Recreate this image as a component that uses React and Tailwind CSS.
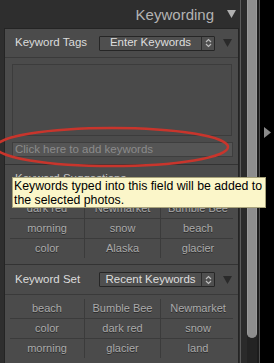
const keywordSuggestions = [
  ["dark red", "Newmarket", "Bumble Bee"],
  ["morning", "snow", "beach"],
  ["color", "Alaska", "glacier"],
];

const recentKeywords = [
  ["beach", "Bumble Bee", "Newmarket"],
  ["color", "dark red", "snow"],
  ["morning", "glacier", "land"],
];

function DownTriangle({ className }) {
  return (
    <svg width="9" height="8" viewBox="0 0 9 8" className={className}>
      <path d="M0 0 H9 L4.5 8 Z" fill="currentColor" />
    </svg>
  );
}

function Dropdown({ label }) {
  return (
    <div className="w-[116px] h-[15px] flex border border-[#262626] bg-[#4f4f4f] rounded-[1px]">
      <div className="flex-1 flex items-center justify-center text-[11.5px] text-[#dedede] leading-none">
        {label}
      </div>
      <div className="w-[13px] border-l border-[#2c2c2c] flex items-center justify-center">
        <svg width="7" height="10" viewBox="0 0 7 10">
          <path d="M1 4 L3.5 1.5 L6 4" fill="none" stroke="#bdbdbd" strokeWidth="1.2" />
          <path d="M1 6 L3.5 8.5 L6 6" fill="none" stroke="#bdbdbd" strokeWidth="1.2" />
        </svg>
      </div>
    </div>
  );
}

function KeywordGrid({ rows }) {
  return (
    <div className="mx-[5px] flex flex-col">
      {rows.map((row, i) => (
        <div
          key={i}
          className={`grid grid-cols-[75px_76px_74px] ${i < rows.length - 1 ? "border-b border-[#3b3b3b]" : ""}`}
        >
          {row.map((word, j) => (
            <div
              key={j}
              className={`h-[19px] flex items-center justify-center text-[11px] text-[#ababab] [text-shadow:0_1px_0_#2a2a2a] ${j < 2 ? "border-r border-[#3b3b3b]" : ""}`}
            >
              {word}
            </div>
          ))}
        </div>
      ))}
    </div>
  );
}

export default function App() {
  return (
    <div
      className="relative w-[274px] h-[363px] flex bg-black overflow-hidden"
      style={{ fontFamily: '"Liberation Sans", Arial, sans-serif' }}
    >
      {/* right panel column */}
      <div className="w-[241px] shrink-0 bg-[#2e2e2e] border-r border-[#5a5a5a] flex flex-col">
        <div className="h-[28px] shrink-0 flex items-center justify-end gap-[13px] pr-[4px]">
          <span className="text-[15px] text-[#b3b3b3] leading-none">Keywording</span>
          <DownTriangle className="text-[#b0b0b0]" />
        </div>

        <div className="ml-[4px] mr-[1px] flex-1 bg-[#4b4b4b] border-x border-t border-[#242424] flex flex-col">
          {/* Keyword Tags */}
          <div className="h-[29px] shrink-0 flex items-center border-b border-[#3a3a3a]">
            <span className="w-[94px] pl-[10px] text-[11.5px] text-[#dcdcdc] leading-none">Keyword Tags</span>
            <Dropdown label="Enter Keywords" />
            <DownTriangle className="ml-[8px] text-[#2a2a2a]" />
          </div>
          <div className="px-[7px] pt-[6px] pb-[7px] flex flex-col gap-[6px] border-b border-[#333]">
            <div className="w-[220px] h-[72px] border border-[#3c3c3c] bg-[#4a4a4a]" />
            <div className="w-[221px] h-[15px] border border-[#3e3e3e] bg-[#555] flex items-center pl-[2px] text-[11.5px] text-[#8b8b8b] leading-none">
              Click here to add keywords
            </div>
          </div>

          {/* Keyword Suggestions */}
          <div className="h-[100px] shrink-0 flex flex-col border-b border-[#333]">
            <div className="h-[34px] shrink-0 pl-[10px] pt-[8px] text-[11.5px] text-[#c8c8c8] leading-none">
              Keyword Suggestions
            </div>
            <KeywordGrid rows={keywordSuggestions} />
          </div>

          {/* Keyword Set */}
          <div className="h-[30px] shrink-0 flex items-center border-b border-[#3a3a3a]">
            <span className="w-[94px] pl-[10px] text-[11.5px] text-[#dcdcdc] leading-none">Keyword Set</span>
            <Dropdown label="Recent Keywords" />
            <DownTriangle className="ml-[8px] text-[#2a2a2a]" />
          </div>
          <div className="pt-[4px]">
            <KeywordGrid rows={recentKeywords} />
          </div>
        </div>
      </div>

      <div className="w-[6px] shrink-0 bg-[#2a2a2a]" />
      <div className="w-[10px] shrink-0 bg-[#232323]">
        <div className="h-[338px] bg-[#8d8d8d] rounded-b-[5px] border-x border-[#9a9a9a]" />
      </div>
      <div className="w-[2px] shrink-0 bg-[#1c1c1c]" />
      <div className="w-[1px] shrink-0 bg-[#4e4e4e]" />
      <div className="flex-1 bg-black pt-[127px] pl-[4px]">
        <svg width="7" height="11" viewBox="0 0 7 11">
          <path d="M0 0 L7 5.5 L0 11 Z" fill="#8a8a8a" />
        </svg>
      </div>

      {/* red highlight ellipse */}
      <svg className="absolute left-0 top-0 pointer-events-none" width="274" height="363">
        <ellipse cx="112" cy="147" rx="116" ry="19" fill="none" stroke="#c8352c" strokeWidth="2.5" />
      </svg>

      {/* tooltip */}
      <div className="absolute left-[12px] top-[177px] w-[254px] h-[31px] bg-[#fbf6c9] border border-[#a7a27a] pl-[1px] pt-[1px] text-[12.3px] leading-[14px] text-black">
        Keywords typed into this field will be added to
        <br />
        the selected photos.
      </div>
    </div>
  );
}
